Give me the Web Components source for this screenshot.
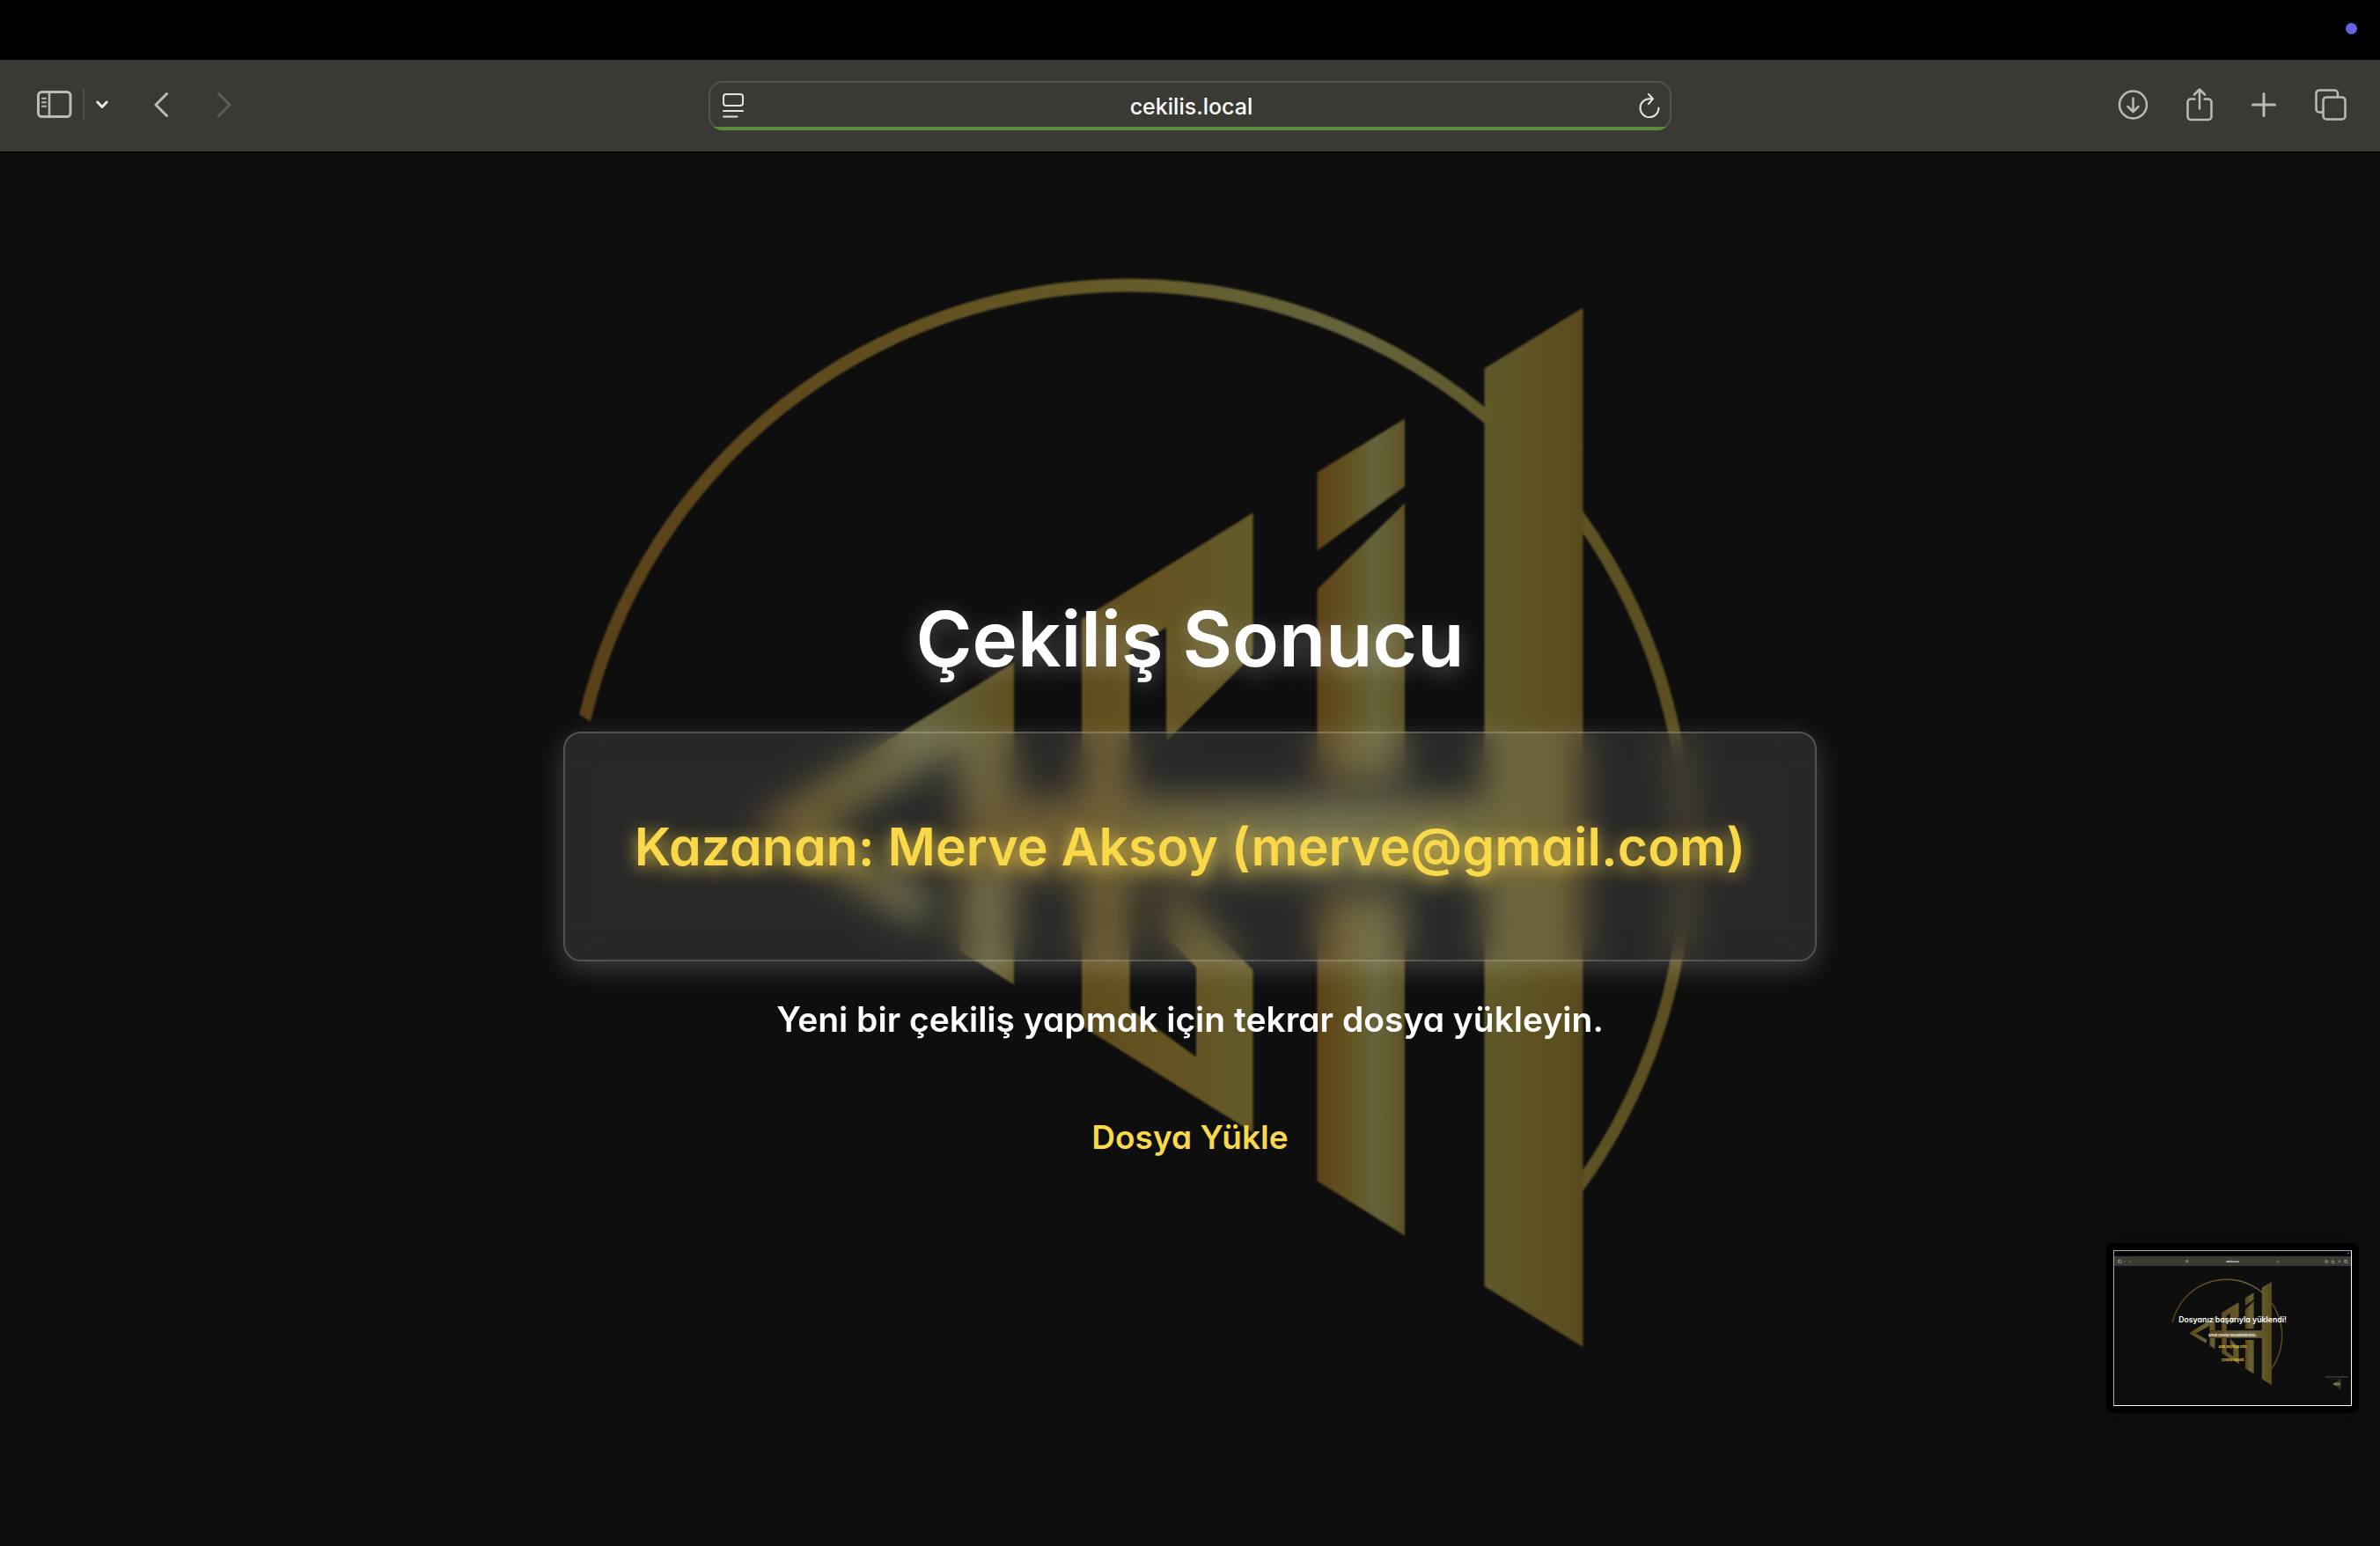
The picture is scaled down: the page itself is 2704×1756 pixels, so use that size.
<!DOCTYPE html>
<html lang="tr">
<head>
<meta charset="utf-8">
<title>Çekiliş Sonucu</title>
<style>
html, body { margin: 0; height: 100%; background: #0e0e0e; }
body { font-family: Inter, "Open Sans", sans-serif; color: #fff; }
</style>
</head>
<body>
<browser-window>
  <nav-toolbar slot="toolbar" address="cekilis.local"></nav-toolbar>
  <draw-page>
    <span slot="title">Çekiliş Sonucu</span>
    <winner-card slot="winner">Kazanan: Merve Aksoy (merve@gmail.com)</winner-card>
    <span slot="note">Yeni bir çekiliş yapmak için tekrar dosya yükleyin.</span>
    <span slot="action">Dosya Yükle</span>
  </draw-page>
  <capture-preview slot="preview"></capture-preview>
</browser-window>

<script>
const component = (name, html, setup) => {
  const template = document.createElement('template');
  template.innerHTML = html;
  customElements.define(name, class extends HTMLElement {
    constructor() {
      super();
      this.attachShadow({ mode: 'open' }).append(template.content.cloneNode(true));
    }
    connectedCallback() { if (setup) setup(this, this.shadowRoot); }
  });
};

/* Gradients and shapes of the monogram, shared by the page and the preview. */
const monogram = `
  <defs>
    <linearGradient id="ring" gradientUnits="userSpaceOnUse" x1="655" y1="0" x2="1925" y2="0">
      <stop offset="0" stop-color="#5a4019"/><stop offset=".25" stop-color="#604d1e"/>
      <stop offset=".5" stop-color="#655c29"/><stop offset=".69" stop-color="#64643d"/>
      <stop offset=".82" stop-color="#605829"/><stop offset="1" stop-color="#5b4d1f"/>
    </linearGradient>
    <linearGradient id="tower"><stop offset="0" stop-color="#60592a"/><stop offset=".5" stop-color="#5e5223"/><stop offset=".85" stop-color="#5b4e1f"/><stop offset="1" stop-color="#594a1e"/></linearGradient>
    <linearGradient id="stem" gradientUnits="userSpaceOnUse" x1="1497" y1="0" x2="1596" y2="0">
      <stop offset="0" stop-color="#5c421a"/><stop offset=".38" stop-color="#635521"/>
      <stop offset=".67" stop-color="#64643d"/><stop offset="1" stop-color="#5f5222"/>
    </linearGradient>
    <linearGradient id="hook" gradientUnits="userSpaceOnUse" x1="1229" y1="0" x2="1424" y2="0">
      <stop offset="0" stop-color="#5f4c1d"/><stop offset=".45" stop-color="#645321"/><stop offset="1" stop-color="#635a2a"/>
    </linearGradient>
    <linearGradient id="arrow" gradientUnits="userSpaceOnUse" x1="852" y1="0" x2="1152" y2="0">
      <stop offset="0" stop-color="#5c431a"/><stop offset=".35" stop-color="#635521"/>
      <stop offset=".66" stop-color="#64653f"/><stop offset="1" stop-color="#5e4f20"/>
    </linearGradient>
    <linearGradient id="foot" gradientUnits="userSpaceOnUse" x1="1084" y1="0" x2="1152" y2="0">
      <stop offset="0" stop-color="#5c431a"/><stop offset=".6" stop-color="#64643d"/><stop offset="1" stop-color="#5f5222"/>
    </linearGradient>
    <linearGradient id="beam" gradientUnits="userSpaceOnUse" x1="1084" y1="0" x2="1687" y2="0">
      <stop offset="0" stop-color="#58431b"/><stop offset=".3" stop-color="#615121"/>
      <stop offset=".72" stop-color="#64643f"/><stop offset="1" stop-color="#605829"/>
    </linearGradient>
  </defs>
  <path fill="url(#ring)" d="M658 811A643 646 0 0 1 1283 316A641 648 0 0 1 1923 962A641 648 0 0 1 1798 1353V1329A627 633 0 0 0 1909 962A627 633 0 0 0 1283 331A629 631 0 0 0 671 819Z"/>
  <path fill="url(#arrow)" d="M852 937L1152 752V906H1090V852L933 939L1058 1012L1048 1054Z"/>
  <path fill="url(#beam)" d="M1090 906H1690V992H1090Z"/>
  <path fill="url(#foot)" d="M1090 992H1152V1118L1090 1079Z"/>
  <path fill="url(#hook)" d="M1229 703L1423.500 582V743L1325 842V712L1283.500 738V1145L1359 1200V1098L1325 1064V1000L1423.500 1101V1286L1229 1165Z"/>
  <path fill="url(#stem)" d="M1496.500 536L1596 475V552L1496.500 625ZM1496.500 669L1596 571V886H1496.500ZM1496.500 1016H1596V1403L1496.500 1341Z"/>
  <path fill="url(#tower)" d="M1686.500 418L1798.500 349V1529.500L1686.500 1460.500Z"/>`;

component('brand-backdrop', `
<style>
  :host { display: block; pointer-events: none; }
  svg { display: block; width: 100%; height: 100%; filter: blur(1px); }
</style>
<svg viewBox="0 172 2704 1584" preserveAspectRatio="xMidYMid slice" aria-hidden="true">${monogram}</svg>`);

component('icon-button', `
<style>
  :host { display: flex; color: #bcbab4; }
  button { display: flex; margin: 0; padding: 0; border: 0; background: none; color: inherit; font: inherit; }
  ::slotted(svg) { display: block; fill: none; stroke: currentColor; stroke-width: 3; stroke-linecap: round; stroke-linejoin: round; }
</style>
<button type="button"><slot></slot></button>`, (host, root) => {
  root.querySelector('button').setAttribute('aria-label', host.getAttribute('label'));
});

component('address-field', `
<style>
  :host { display: flex; align-items: center; position: relative; overflow: hidden; box-sizing: border-box;
    height: 56px; padding: 0 13px 0 16px; border-radius: 16px; box-shadow: inset 0 0 0 2px #53524d; }
  input { flex: 1; min-width: 0; margin: 0; padding: 2px 0 0; border: 0; outline: 0; background: none; color: #fff;
    font: 500 25px/32px Inter, sans-serif; text-align: center; }
  icon-button { color: #e4e3e0; }
  .progress { position: absolute; left: 0; right: 0; bottom: 0; height: 4px; background: #5c8c41; }
</style>
<icon-button label="Okuyucu"><svg width="24" height="28" viewBox="0 0 24 28" style="stroke-width:2"><rect x="1" y="1" width="22" height="13" rx="3"/><path d="M1 20H23M1 26.500H16.500"/></svg></icon-button>
<input type="text" aria-label="Adres">
<icon-button label="Yenile"><svg width="24" height="28" viewBox="0 0 24 28" style="stroke-width:2"><path d="M11 1L16 6.200L11 12M15.500 6.200H12A10.500 10.500 0 1 0 22.500 16.500"/></svg></icon-button>
<div class="progress"></div>`, (host, root) => {
  root.querySelector('input').value = host.getAttribute('value');
});

component('nav-toolbar', `
<style>
  :host { display: grid; grid-template-columns: 1fr minmax(0, 1094px) 1fr; align-items: center; box-sizing: border-box;
    height: 105px; padding: 0 38px; background: #3b3934; border-bottom: 1px solid #000; }
  .group { display: flex; align-items: center; padding-bottom: 2px; }
  .split { width: 2px; height: 36px; margin: 0 13px 0 12px; background: #4f4d49; }
  .history { display: flex; gap: 56px; margin-left: 52px; }
  .tools { justify-content: flex-end; gap: 44px; }
  .bright { color: #e8e6e0; }
  .dim { color: #5f5d58; }
</style>
<div class="group">
  <icon-button label="Kenar çubuğu"><svg width="44" height="32" viewBox="-4 0 44 32"><rect x="1.500" y="1.500" width="36.500" height="28" rx="4"/><path d="M14 2V29.500" stroke-width="2.500"/><path d="M6 8.700H10M6 13.200H10M6 17.700H10" stroke-width="2"/></svg></icon-button>
  <div class="split"></div>
  <icon-button label="Sekme grupları" class="bright"><svg width="14" height="10" viewBox="0 0 14 10"><path d="M1.800 2L7 7.500L12.200 2"/></svg></icon-button>
  <div class="history">
    <icon-button label="Geri"><svg width="16" height="28" viewBox="0 0 16 28"><path d="M14.500 1.500L2 14L14.500 26.500"/></svg></icon-button>
    <icon-button label="İleri" class="dim"><svg width="16" height="28" viewBox="0 0 16 28"><path d="M1.500 1.500L14 14L1.500 26.500"/></svg></icon-button>
  </div>
</div>
<address-field></address-field>
<div class="group tools">
  <icon-button label="İndirilenler"><svg width="34" height="34" viewBox="0 0 34 34" style="stroke-width:2.500"><circle cx="17.500" cy="17" r="15.500"/><path d="M17.500 9.500V24.500M11.500 19L17.500 25L23.500 19"/></svg></icon-button>
  <icon-button label="Paylaş"><svg width="30" height="38" viewBox="0 0 30 38" style="stroke-width:2.500"><path d="M9.500 12.500H5A3.500 3.500 0 0 0 1.500 16V32.500A3.500 3.500 0 0 0 5 36H25A3.500 3.500 0 0 0 28.500 32.500V16A3.500 3.500 0 0 0 25 12.500H20.500M15 23.500V2M9 7.500L15 1.500L21 7.500"/></svg></icon-button>
  <icon-button label="Yeni sekme"><svg width="28" height="28" viewBox="0 0 28 28"><path d="M14 1.500V26.500M1.500 14H26.500"/></svg></icon-button>
  <icon-button label="Sekmeler"><svg width="36" height="36" viewBox="0 0 36 36" style="stroke-width:2.500"><rect x="9.500" y="9.500" width="25" height="25" rx="3.500"/><path d="M9 26.500H5A3.500 3.500 0 0 1 1.500 23V5A3.500 3.500 0 0 1 5 1.500H22.500A3.500 3.500 0 0 1 26 5V9"/></svg></icon-button>
</div>`, (host, root) => {
  const field = root.querySelector('address-field');
  field.setAttribute('value', host.getAttribute('address'));
  field.shadowRoot.querySelector('input').value = host.getAttribute('address');
});

/* The glass layer reaches past the card and is clipped to it, so the blur stays even up to the rim. */
component('winner-card', `
<style>
  :host { display: block; position: relative; padding: 88px 81px; }
  .glass { position: absolute; inset: -60px; clip-path: inset(60px round 20px); background: rgba(255,255,255,.11);
    -webkit-backdrop-filter: blur(20px); backdrop-filter: blur(20px); }
  .rim { position: absolute; inset: 0; border-radius: 20px; border: 2px solid rgba(255,255,255,.2);
    box-sizing: border-box; box-shadow: 0 8px 30px rgba(255,255,255,.2); }
  h2 { position: relative; margin: 0; font-size: 59px; line-height: 85px; font-weight: 600; color: #f9d849; white-space: nowrap;
    font-feature-settings: "cv11"; text-shadow: 0 4px 20px rgba(249,216,73,.85); }
</style>
<div class="glass"></div>
<div class="rim"></div>
<h2><slot></slot></h2>`);

component('draw-page', `
<style>
  :host { display: flex; flex-direction: column; align-items: center; justify-content: center; position: relative;
    box-sizing: border-box; padding-top: 54px; overflow: hidden; font-weight: 600; font-feature-settings: "cv11"; }
  brand-backdrop { position: absolute; inset: 0; }
  h1, p, a { position: relative; }
  h1 { margin: 0 0 43px; font-size: 87px; line-height: 124px; font-weight: 600; text-shadow: 0 6px 24px rgba(255,255,255,.3); }
  p { margin: 37px 0 78px; font-size: 39px; line-height: 58px; }
  a { font-size: 37px; line-height: 54px; color: #f9d849; text-decoration: none; }
</style>
<brand-backdrop></brand-backdrop>
<h1><slot name="title"></slot></h1>
<slot name="winner"></slot>
<p><slot name="note"></slot></p>
<a href="#"><slot name="action"></slot></a>`);

component('capture-preview', `
<style>
  :host { display: block; box-sizing: border-box; width: 287px; padding: 8px; border-radius: 8px; background: #000;
    box-shadow: 0 0 20px rgba(0,0,0,.35); }
  .frame { display: block; width: 100%; box-sizing: border-box; border: 1px solid #fff; border-color: #aaa #fff #fff #aaa; }
  text { font-family: Inter, sans-serif; font-weight: 600; fill: #fff; text-anchor: middle; font-feature-settings: "cv11"; }
  .gold { fill: #f0cd3c; }
  .icons { fill: none; stroke: #bcbab4; stroke-width: 5; }
</style>
<svg class="frame" viewBox="0 0 2704 1756" role="img" aria-label="Ekran görüntüsü önizlemesi">
  <rect width="2704" height="1756" fill="#0e0e0e"/>
  <rect width="2704" height="58" fill="#000"/>
  <rect y="58" width="2704" height="112" fill="#3b3934"/>
  <circle cx="2672" cy="24" r="10" fill="#6561e8"/>
  <g class="icons">
    <path d="M42 103H81V134H42ZM56 103V134M109 116L116 123L123 116M191 105L177 119L191 133M822 107H845V120H822ZM822 127H845M1876 110A11 11 0 1 0 1886 121M2571 105V132M2558 119H2585M2484 112H2514V137H2484ZM2499 126V101M2638 109H2665V136H2638ZM2630 128V101H2657M2424 111V127M2416 120L2424 128L2432 120"/>
    <path d="M247 105L261 119L247 133" opacity=".4"/>
    <circle cx="2424" cy="119" r="16"/>
  </g>
  <text x="1352" y="128" font-size="26">cekilis.local</text>
  ${monogram}
  <text x="1352" y="819" font-size="88">Dosyanız başarıyla yüklendi!</text>
  <text x="1352" y="976" font-size="38">Şimdi çekilişi başlatabilirsiniz.</text>
  <text class="gold" x="1352" y="1107" font-size="38">Ana Sayfaya Dön</text>
  <text class="gold" x="1352" y="1258" font-size="38">Çekilişi Başlat</text>
  <rect x="2400" y="1418" width="285" height="190" fill="#000"/>
  <svg x="2408" y="1426" width="269" height="175" viewBox="0 0 2704 1756">
    <rect width="2704" height="1756" fill="#0e0e0e" stroke="#777" stroke-width="30"/>
    <rect width="2704" height="170" fill="#3b3934"/>
    ${monogram}
    <path d="M950 850H1760M1060 1000H1640" stroke="#ccc" stroke-width="60"/>
  </svg>
</svg>`);

component('browser-window', `
<style>
  :host { display: flex; flex-direction: column; min-height: 100vh; position: relative; }
  .strip { display: flex; align-items: center; justify-content: flex-end; box-sizing: border-box; height: 68px; padding: 0 26px 4px 0; background: #000; }
  .dot { width: 13px; height: 13px; border-radius: 50%; background: #6561e8; }
  ::slotted(draw-page) { flex: 1; }
  ::slotted(capture-preview) { position: absolute; right: 24px; bottom: 151px; }
</style>
<div class="strip"><div class="dot"></div></div>
<slot name="toolbar"></slot>
<slot></slot>
<slot name="preview"></slot>`);
</script>
</body>
</html>
